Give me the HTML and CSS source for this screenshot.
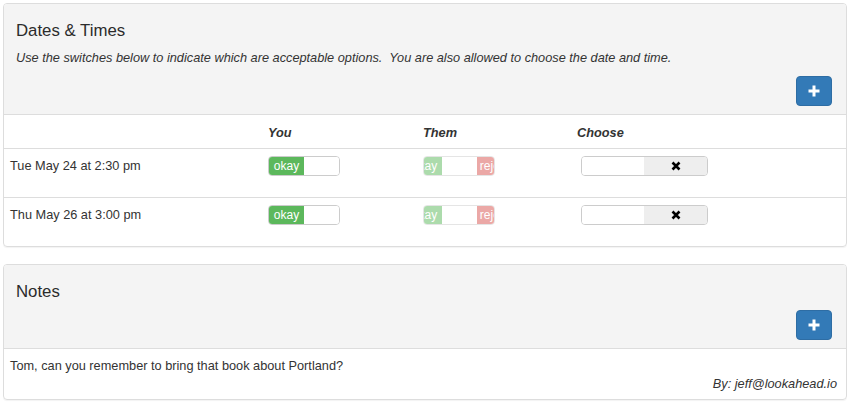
FILE: index.html
```html
<!DOCTYPE html>
<html>
<head>
  <title>Meeting Options</title>
  <link rel="stylesheet" href="styles.css">
</head>
<body>

  <div class="panel">
    <div class="panel-heading">
      <h3>Dates &amp; Times</h3>
      <p class="hint">Use the switches below to indicate which are acceptable options.&nbsp; You are also allowed to choose the date and time.</p>
      <div class="actions">
        <button class="btn-add" type="button">
          <svg width="12" height="12" viewBox="0 0 12 12"><path d="M6 0.5v11M0.5 6h11" stroke="#fff" stroke-width="3"/></svg>
        </button>
      </div>
    </div>

    <table class="times">
      <colgroup>
        <col class="col-date">
        <col class="col-you">
        <col class="col-them">
        <col>
      </colgroup>
      <thead>
        <tr>
          <th></th>
          <th>You</th>
          <th>Them</th>
          <th>Choose</th>
        </tr>
      </thead>
      <tbody>
        <tr>
          <td class="date">Tue May 24 at 2:30 pm</td>
          <td>
            <div class="switch">
              <div class="track">
                <span class="on">okay</span><span class="label"></span><span class="off">reject</span>
              </div>
            </div>
          </td>
          <td>
            <div class="switch readonly">
              <div class="track mid">
                <span class="on">okay</span><span class="label"></span><span class="off">reject</span>
              </div>
            </div>
          </td>
          <td>
            <div class="choose">
              <input type="text">
              <span class="addon">
                <svg width="10" height="10" viewBox="0 0 10 10"><path d="M1.5 1.5l7 7M8.5 1.5l-7 7" stroke="#000" stroke-width="2.6"/></svg>
              </span>
            </div>
          </td>
        </tr>
        <tr>
          <td class="date">Thu May 26 at 3:00 pm</td>
          <td>
            <div class="switch">
              <div class="track">
                <span class="on">okay</span><span class="label"></span><span class="off">reject</span>
              </div>
            </div>
          </td>
          <td>
            <div class="switch readonly">
              <div class="track mid">
                <span class="on">okay</span><span class="label"></span><span class="off">reject</span>
              </div>
            </div>
          </td>
          <td>
            <div class="choose">
              <input type="text">
              <span class="addon">
                <svg width="10" height="10" viewBox="0 0 10 10"><path d="M1.5 1.5l7 7M8.5 1.5l-7 7" stroke="#000" stroke-width="2.6"/></svg>
              </span>
            </div>
          </td>
        </tr>
      </tbody>
    </table>
  </div>

  <div class="panel">
    <div class="panel-heading">
      <h3>Notes</h3>
      <div class="actions">
        <button class="btn-add" type="button">
          <svg width="12" height="12" viewBox="0 0 12 12"><path d="M6 0.5v11M0.5 6h11" stroke="#fff" stroke-width="3"/></svg>
        </button>
      </div>
    </div>
    <div class="note">
      <div>Tom, can you remember to bring that book about Portland?</div>
      <div class="author">By: jeff@lookahead.io</div>
    </div>
  </div>

</body>
</html>
```

FILE: styles.css
```css
body {
  margin: 3px;
  font-family: "Liberation Sans", Arial, sans-serif;
  font-size: 12.75px;
  line-height: 18px;
  color: #333;
  background: #fff;
}

.panel {
  border: 1px solid #ddd;
  border-radius: 4px;
  box-shadow: 0 1px 1px rgba(0, 0, 0, 0.05);
  margin-bottom: 17px;
  overflow: hidden;
}

.panel-heading {
  background-color: #f4f4f4;
  border-bottom: 1px solid #ddd;
  padding: 17px 14px 8px 12px;
}

.panel-heading h3 {
  margin: 0;
  font-size: 16.8px;
  line-height: 19px;
  font-weight: normal;
  color: #2b2b2b;
}

.hint {
  margin: 9px 0 0;
  font-style: italic;
}

.actions {
  display: flex;
  justify-content: flex-end;
  margin-top: 9px;
}

.btn-add {
  width: 36px;
  height: 30px;
  padding: 0;
  display: flex;
  align-items: center;
  justify-content: center;
  background-color: #337ab7;
  border: 1px solid #2e6da4;
  border-radius: 4px;
  cursor: pointer;
}

/* table of dates */
.times {
  width: 100%;
  border-collapse: collapse;
  table-layout: fixed;
}

.col-date {
  width: 256px;
}

.col-you {
  width: 155px;
}

.col-them {
  width: 154px;
}

.times th {
  text-align: left;
  font-style: italic;
  font-weight: bold;
  padding: 9px 8px 6px;
  border-bottom: 1px solid #ddd;
}

.times td {
  padding: 7px 8px 21px;
  vertical-align: top;
}

.times tbody tr + tr td {
  border-top: 1px solid #ddd;
}

.times td.date {
  padding-top: 8px;
  padding-bottom: 20px;
  padding-left: 6px;
}

/* switches */
.switch {
  width: 70px;
  height: 18px;
  border: 1px solid #ccc;
  border-radius: 4px;
  overflow: hidden;
}

.track {
  display: flex;
  width: 105px;
}

.track.mid {
  margin-left: -17px;
}

.track span {
  flex: 0 0 35px;
  height: 18px;
  line-height: 18px;
  font-size: 12px;
  text-align: center;
  color: #fff;
}

.track .on {
  background-color: #5cb85c;
}

.track .label {
  background-color: #fff;
}

.track .off {
  background-color: #d9534f;
}

.switch.readonly {
  opacity: 0.5;
}

/* choose a time */
.choose {
  display: flex;
  width: 125px;
  height: 18px;
  margin-left: 4px;
  border: 1px solid #ccc;
  border-radius: 4px;
  overflow: hidden;
}

.choose input {
  width: 62px;
  height: 18px;
  padding: 0;
  border: 0;
  outline: none;
  background: #fff;
}

.choose .addon {
  flex: 1;
  display: flex;
  align-items: center;
  justify-content: center;
  background-color: #eee;
}

/* notes */
.note {
  padding: 8px 9px 6px 6px;
}

.author {
  text-align: right;
  font-style: italic;
}
```
